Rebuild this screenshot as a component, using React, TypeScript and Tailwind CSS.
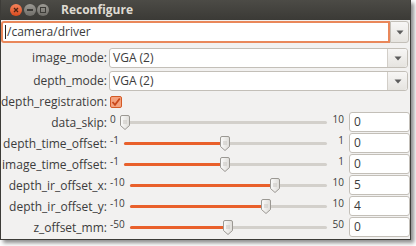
import React from "react";

const font = { fontFamily: '"Open Sans", "Noto Sans", sans-serif' };

function Arrow() {
  return (
    <svg width="8" height="5" viewBox="0 0 8 5">
      <path d="M0.5 0.5 L7.5 0.5 L4 4.5 Z" fill="#5c5c5c" />
    </svg>
  );
}

function Combo({ text }: { text: string }) {
  return (
    <div className="flex h-[20px] w-[299px] rounded-[3px] border border-[#c3bfb8] bg-white">
      <div className="flex flex-1 items-center pl-[3px] text-[12px] text-[#3c3c3c]">{text}</div>
      <div className="flex w-[20px] items-center justify-center rounded-r-[3px] border-l border-[#d2cec8] bg-gradient-to-b from-[#f7f6f5] to-[#e6e4e0]">
        <Arrow />
      </div>
    </div>
  );
}

function Thumb() {
  return (
    <svg width="10" height="15" viewBox="0 0 10 15">
      <defs>
        <linearGradient id="tg" x1="0" y1="0" x2="1" y2="0">
          <stop offset="0" stopColor="#fbfbfa" />
          <stop offset="1" stopColor="#dedcd8" />
        </linearGradient>
      </defs>
      <path d="M2 0.5 H8 Q9.5 0.5 9.5 2 V10.5 L5 14.5 L0.5 10.5 V2 Q0.5 0.5 2 0.5 Z" fill="url(#tg)" stroke="#9b9893" />
      <path d="M4 5 V9 M6 5 V9" stroke="#c8c5c0" strokeWidth="1" />
    </svg>
  );
}

function SliderRow({
  label,
  min,
  max,
  value,
}: {
  label: string;
  min: number;
  max: number;
  value: number;
}) {
  const frac = (value - min) / (max - min);
  return (
    <div className="flex h-[21px] items-start">
      <div className="w-[106px] pt-[3px] text-right text-[12px] leading-[16px] text-[#3c3c3c]">{label}</div>
      <div className="ml-[3px] pt-[2px] text-[10px] leading-[11px] text-[#3c3c3c]">{min}</div>
      <div className="relative ml-[5px] mr-[5px] h-[21px] flex-1">
        <div className="absolute left-0 right-0 top-[9px] h-[3px] rounded-full bg-[#d3d0cb]" />
        {value !== min && (
          <div
            className="absolute left-0 top-[9px] h-[3px] rounded-full bg-[#e9602b]"
            style={{ width: `calc(4.5px + ${frac} * (100% - 9px))` }}
          />
        )}
        <div
          className="absolute top-[3px]"
          style={{ left: `calc(${frac} * (100% - 9px) - 0.5px)` }}
        >
          <Thumb />
        </div>
      </div>
      <div className="w-[12px] pt-[2px] text-right text-[10px] leading-[11px] text-[#3c3c3c]">{max}</div>
      <div className="ml-[5px] flex h-[20px] w-[61px] items-center rounded-[3px] border border-[#c3bfb8] bg-white pl-[4px] text-[12px] text-[#3c3c3c]">
        {value}
      </div>
    </div>
  );
}

export default function App() {
  return (
    <div className="h-[246px] w-[416px] bg-white" style={font}>
      <div className="flex h-[240px] w-[411px] flex-col border-x border-b border-[#3d3c38] bg-[#f2f1f0] shadow-[3px_3px_4px_rgba(0,0,0,0.45)]">
        {/* title bar */}
        <div className="flex h-[20px] items-center bg-gradient-to-b from-[#4c4b46] to-[#3b3a36]">
          <div className="ml-[9px] flex h-[12px] w-[12px] items-center justify-center rounded-full bg-gradient-to-b from-[#f7835a] to-[#d84a1c] text-[9px] leading-none text-[#5a2412]">
            <svg width="6" height="6" viewBox="0 0 6 6">
              <path d="M1 1 L5 5 M5 1 L1 5" stroke="#4a2414" strokeWidth="1.3" />
            </svg>
          </div>
          <div className="ml-[2px] flex h-[12px] w-[12px] items-center justify-center rounded-full bg-gradient-to-b from-[#9d9b95] to-[#6f6d68]">
            <div className="h-[2px] w-[6px] bg-[#3c3b37]" />
          </div>
          <div className="ml-[1px] flex h-[12px] w-[12px] items-center justify-center rounded-full bg-gradient-to-b from-[#9d9b95] to-[#6f6d68]">
            <div className="h-[6px] w-[6px] border border-[#3c3b37]" />
          </div>
          <div className="ml-[12px] text-[12px] font-bold text-[#dfdbd2]">Reconfigure</div>
        </div>
        {/* top combo */}
        <div className="mt-[1px] flex h-[22px] pr-[1px]">
          <div className="flex flex-1 items-center rounded-l-[3px] border-2 border-[#e9875a] bg-white pl-[2px] text-[12px] text-[#3c3c3c]">
            <span className="mr-[1px] inline-block h-[14px] w-px bg-[#222]" />
            /camera/driver
          </div>
          <div className="flex w-[19px] items-center justify-center rounded-r-[3px] border border-[#c3bfb8] bg-gradient-to-b from-[#f7f6f5] to-[#e6e4e0]">
            <Arrow />
          </div>
        </div>
        {/* rows */}
        <div className="mt-[5px] flex h-[20px] items-center">
          <div className="w-[106px] text-right text-[12px] text-[#3c3c3c]">image_mode:</div>
          <div className="ml-[2px]">
            <Combo text="VGA (2)" />
          </div>
        </div>
        <div className="mt-[3px] flex h-[20px] items-center">
          <div className="w-[106px] text-right text-[12px] text-[#3c3c3c]">depth_mode:</div>
          <div className="ml-[2px]">
            <Combo text="VGA (2)" />
          </div>
        </div>
        <div className="flex h-[21px] items-center">
          <div className="w-[106px] text-right text-[12px] text-[#3c3c3c]">depth_registration:</div>
          <div className="ml-[3px]">
            <svg width="12" height="12" viewBox="0 0 12 12">
              <rect x="0.5" y="0.5" width="11" height="11" rx="1.5" fill="#f4a27e" stroke="#d45a26" />
              <path d="M2.5 6 L5 8.8 L9.8 2.5" fill="none" stroke="#c9481a" strokeWidth="1.8" />
            </svg>
          </div>
        </div>
        <SliderRow label="data_skip:" min={0} max={10} value={0} />
        <SliderRow label="depth_time_offset:" min={-1} max={1} value={0} />
        <SliderRow label="image_time_offset:" min={-1} max={1} value={0} />
        <SliderRow label="depth_ir_offset_x:" min={-10} max={10} value={5} />
        <SliderRow label="depth_ir_offset_y:" min={-10} max={10} value={4} />
        <SliderRow label="z_offset_mm:" min={-50} max={50} value={0} />
      </div>
    </div>
  );
}
